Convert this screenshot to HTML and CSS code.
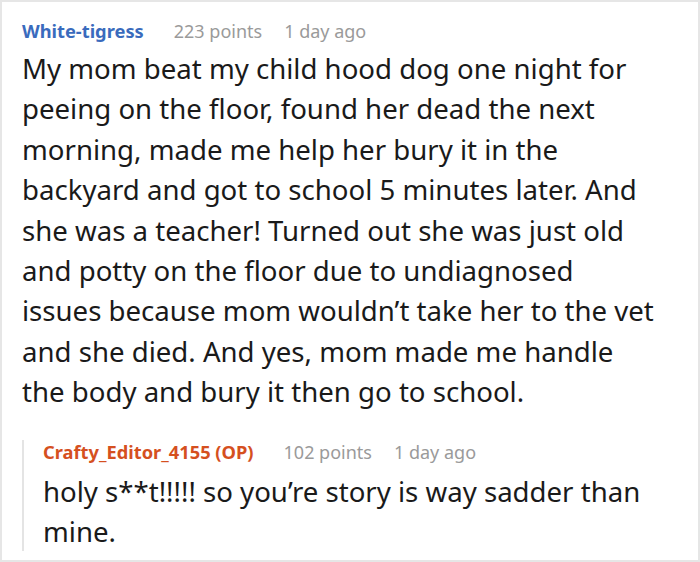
FILE: index.html
```html
<!DOCTYPE html>
<html>
<head>
<meta charset="utf-8">
<link rel="stylesheet" href="styles.css">
</head>
<body>
<div class="frame">
  <div class="comment">
    <div class="meta">
      <span class="author author-blue">White-tigress</span>
      <span class="info">223 points</span>
      <span class="info">1 day ago</span>
    </div>
    <p class="text">My mom beat my child hood dog one night for<br>peeing on the floor, found her dead the next<br>morning, made me help her bury it in the<br>backyard and got to school 5 minutes later. And<br>she was a teacher! Turned out she was just old<br>and potty on the floor due to undiagnosed<br>issues because mom wouldn’t take her to the vet<br>and she died. And yes, mom made me handle<br>the body and bury it then go to school.</p>
    <div class="reply">
      <div class="meta">
        <span class="author author-op">Crafty_Editor_4155 (OP)</span>
        <span class="info">102 points</span>
        <span class="info">1 day ago</span>
      </div>
      <p class="text">holy s**t!!!!! so you’re story is way sadder than<br>mine.</p>
    </div>
  </div>
</div>
</body>
</html>
```

FILE: styles.css
```css
html, body {
  margin: 0;
  padding: 0;
  background: #fff;
}
.frame {
  box-sizing: border-box;
  width: 700px;
  height: 562px;
  border: 2px solid #e6e6e6;
  overflow: hidden;
  font-family: "Noto Sans", "Open Sans", sans-serif;
}
.comment {
  padding: 17px 20px 0 20px;
}
.meta {
  display: flex;
  align-items: center;
  font-size: 18px;
  line-height: 24px;
}
.author {
  font-weight: 700;
  font-size: 18.3px;
  margin-right: 30px;
}
.author-blue {
  color: #3a6bbd;
}
.author-op {
  color: #d5501f;
}
.info {
  color: #9a9a9a;
  margin-right: 22px;
}
.text {
  margin: 0;
  font-size: 27.6px;
  line-height: 40.4px;
  color: #1a1a1a;
  padding-top: 5px;
  white-space: nowrap;
}
.reply {
  margin-top: 39px;
  border-left: 2px solid #e4e4e4;
  padding-left: 19px;
}
.reply .meta {
  margin-top: -11px;
}
.reply .text {
  padding-top: 7px;
  margin-bottom: -10px;
}
```
